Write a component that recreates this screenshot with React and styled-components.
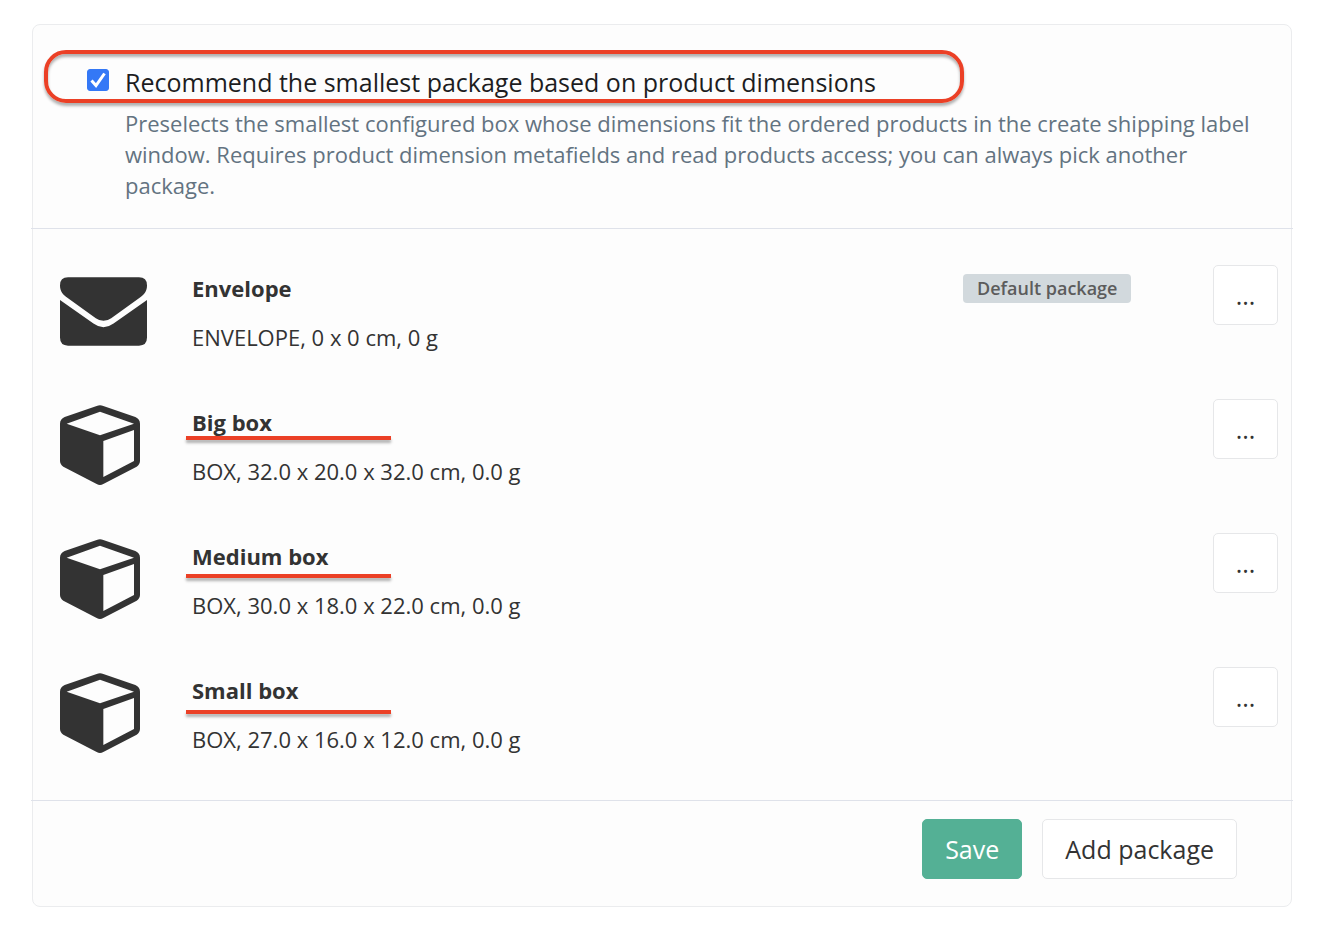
import React from "react";
import styled, { createGlobalStyle } from "styled-components";

const GlobalStyle = createGlobalStyle`
  *, *::before, *::after { box-sizing: border-box; }
  body {
    margin: 0;
    background: #ffffff;
    color: #333333;
    font-family: "Open Sans", "Noto Sans", sans-serif;
    font-size: 22px;
    line-height: 31px;
  }
`;

const Page = styled.main`
  padding: 24px 34px 35px 32px;
`;

const Card = styled.form`
  border: 1px solid #ebecee;
  border-radius: 8px;
  background: #fdfdfd;
`;

const Section = styled.section`
  margin: 0 -2px;
  border-bottom: 1px solid #dfe2ea;
`;

const Settings = styled(Section)`
  padding: 39px 36px 27px 56px;
`;

const Option = styled.label`
  position: relative;
  display: inline-flex;
  gap: 16px;
  vertical-align: top;
  color: #1d1d1f;
  font-size: 25px;
  line-height: 36px;
`;

const CheckWrap = styled.span`
  display: grid;
  height: 22px;
  margin-top: 5px;

  & > * { grid-area: 1 / 1; }
  svg { width: 22px; height: 22px; pointer-events: none; }
`;

const Checkbox = styled.input`
  appearance: none;
  width: 22px;
  height: 22px;
  margin: 0;
  border: 1px solid #3478f6;
  border-radius: 3px;
  background: #ffffff;

  &:checked { background: #3478f6; }
`;

const Highlight = styled.span`
  position: absolute;
  inset: -14px -88px -3px -43px;
  border: 4px solid #eb4026;
  border-radius: 22px;
  box-shadow: 0 3px 3px rgba(0, 0, 0, 0.3), inset 0 3px 3px rgba(0, 0, 0, 0.3);
  pointer-events: none;
`;

const Help = styled.p`
  margin: 8px 0 0 38px;
  color: #637381;
`;

const PackageList = styled(Section)`
  display: grid;
  gap: 42px;
  padding: 36px 15px 41px 29px;
`;

const PackageRow = styled.article`
  display: grid;
  grid-template-columns: 132px 1fr 250px 65px;
  align-items: start;
  height: 92px;
`;

const IconCell = styled.div`
  display: flex;
  align-items: center;
  height: 92px;
  color: #333333;

  svg { display: block; }
`;

const PackageText = styled.div`
  display: grid;
  gap: 18px;
  padding-top: 8px;
`;

const PackageName = styled.h2`
  position: relative;
  margin: 0;
  font-size: 22px;
  font-weight: 700;
  line-height: 31px;
`;

const Underline = styled.span`
  position: absolute;
  top: ${(p) => p.$top}px;
  left: -6px;
  width: 205px;
  height: 4px;
  background: #eb4026;
  box-shadow: 0 3px 3px rgba(0, 0, 0, 0.3);
`;

const PackageInfo = styled.p`
  margin: 0;
`;

const Badge = styled.span`
  justify-self: start;
  margin-top: 9px;
  padding: 0 14px;
  border-radius: 4px;
  background: #d2d9dd;
  color: #5c5c5c;
  font-size: 18px;
  font-weight: 600;
  line-height: 29px;
`;

const Button = styled.button`
  height: 60px;
  padding: 0 22px;
  border: 1px solid ${(p) => (p.$primary ? "#54b095" : "#e6e7e9")};
  border-radius: 5px;
  background: ${(p) => (p.$primary ? "#54b095" : "#ffffff")};
  color: ${(p) => (p.$primary ? "#ffffff" : "#333333")};
  font-family: inherit;
  font-size: 25px;
  line-height: 36px;
`;

const MenuButton = styled(Button)`
  grid-column: 4;
  padding: 0;
`;

const Footer = styled.footer`
  display: flex;
  justify-content: flex-end;
  gap: 20px;
  padding: 18px 54px 27px;
`;

function EnvelopeIcon() {
  return (
    <svg width="87" height="69" viewBox="0 0 260 204" fill="currentColor" aria-hidden="true">
      <path d="M24 0H236Q260 0 260 24C260 40 252 51 238 61L153 122Q130 138 107 122L22 61C8 51 0 40 0 24Q0 0 24 0Z" />
      <path d="M0 68L100 138Q130 160 160 138L260 68V180Q260 204 236 204H24Q0 204 0 180Z" />
    </svg>
  );
}

function BoxIcon() {
  return (
    <svg width="80" height="80" viewBox="0 0 240 240" fill="currentColor" aria-hidden="true">
      <path
        fillRule="evenodd"
        d="M110 3Q120 -2 130 3L226 36Q240 42 240 56V168Q240 178 230 185L130 237Q120 243 110 237L10 185Q0 178 0 168V56Q0 42 14 36ZM20 56L120 91L222 56L120 20ZM130 108V216L222 168V75Z"
      />
    </svg>
  );
}

const packages = [
  { name: "Envelope", info: "ENVELOPE, 0 x 0 cm, 0 g", Icon: EnvelopeIcon, isDefault: true },
  { name: "Big box", info: "BOX, 32.0 x 20.0 x 32.0 cm, 0.0 g", Icon: BoxIcon, mark: 29 },
  { name: "Medium box", info: "BOX, 30.0 x 18.0 x 22.0 cm, 0.0 g", Icon: BoxIcon, mark: 33 },
  { name: "Small box", info: "BOX, 27.0 x 16.0 x 12.0 cm, 0.0 g", Icon: BoxIcon, mark: 35 },
];

export default function App() {
  return (
    <Page>
      <GlobalStyle />
      <Card onSubmit={(e) => e.preventDefault()}>
        <Settings>
          <Option htmlFor="recommend">
            <CheckWrap>
              <Checkbox id="recommend" type="checkbox" defaultChecked aria-describedby="recommend-help" />
              <svg viewBox="0 0 22 22" fill="none" stroke="#ffffff" strokeWidth="3" aria-hidden="true">
                <path d="M4.5 11.5L9 16.5L17.5 4.5" />
              </svg>
            </CheckWrap>
            Recommend the smallest package based on product dimensions
            <Highlight />
          </Option>
          <Help id="recommend-help">
            Preselects the smallest configured box whose dimensions fit the ordered products in the
            create shipping label window. Requires product dimension metafields and read products
            access; you can always pick another package.
          </Help>
        </Settings>
        <PackageList>
          {packages.map(({ name, info, Icon, isDefault, mark }) => (
            <PackageRow key={name}>
              <IconCell>
                <Icon />
              </IconCell>
              <PackageText>
                <PackageName>
                  {name}
                  {mark && <Underline $top={mark} />}
                </PackageName>
                <PackageInfo>{info}</PackageInfo>
              </PackageText>
              {isDefault && <Badge>Default package</Badge>}
              <MenuButton type="button" aria-label={`Actions for ${name}`}>
                ...
              </MenuButton>
            </PackageRow>
          ))}
        </PackageList>
        <Footer>
          <Button type="submit" $primary>
            Save
          </Button>
          <Button type="button">Add package</Button>
        </Footer>
      </Card>
    </Page>
  );
}
